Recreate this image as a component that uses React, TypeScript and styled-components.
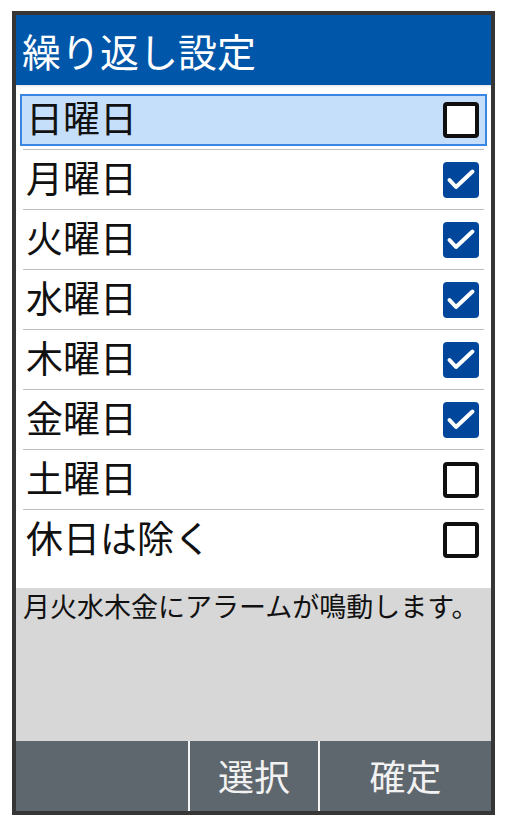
import React from "react";
import styled, { createGlobalStyle } from "styled-components";

const GlobalStyle = createGlobalStyle`
  html, body {
    margin: 0;
    padding: 0;
    background: #ffffff;
  }
  body {
    font-family: "Noto Sans CJK JP", "Noto Sans", sans-serif;
  }
`;

const Frame = styled.div`
  box-sizing: border-box;
  margin: 11px 0 0 12px;
  width: 483px;
  height: 804px;
  border: 4px solid #363636;
  display: flex;
  flex-direction: column;
  background: #ffffff;
  overflow: hidden;
`;

const Header = styled.div`
  height: 70px;
  flex: none;
  background: #0056a8;
  color: #ffffff;
  display: flex;
  align-items: center;
  padding-left: 6px;
  font-size: 39px;
  box-shadow: 0 1px 2px rgba(0, 0, 0, 0.12);
  position: relative;
  z-index: 1;
`;

const List = styled.div`
  height: 503px;
  flex: none;
  padding-top: 5px;
  box-sizing: border-box;
  background: #ffffff;
`;

const Row = styled.div<{ $last?: boolean }>`
  box-sizing: border-box;
  height: 60px;
  margin: 0 7px;
  padding-top: 4px;
  border-bottom: 1px solid ${(p) => (p.$last ? "transparent" : "#bdbfbf")};
`;

const Item = styled.div<{ $selected?: boolean }>`
  box-sizing: border-box;
  height: 52px;
  margin: 0 -3px;
  padding: 0 6px 0 4px;
  display: flex;
  align-items: center;
  justify-content: space-between;
  border: 2px solid ${(p) => (p.$selected ? "#3a86e2" : "transparent")};
  background: ${(p) => (p.$selected ? "#c5dffb" : "transparent")};
  font-size: 37px;
  color: #111111;
`;

const Label = styled.span`
  line-height: 1;
  padding-bottom: 5px;
`;

const Box = styled.span<{ $checked?: boolean }>`
  box-sizing: border-box;
  width: 36px;
  height: 36px;
  flex: none;
  border-radius: 4px;
  display: flex;
  align-items: center;
  justify-content: center;
  background: ${(p) => (p.$checked ? "#00479b" : "#ffffff")};
  border: ${(p) => (p.$checked ? "none" : "4px solid #0f0f0f")};
`;

const Info = styled.div`
  height: 153px;
  flex: none;
  box-sizing: border-box;
  background: #d7d7d7;
  padding: 0 0 0 7px;
  font-size: 27px;
  line-height: 1.3;
  color: #111111;
`;

const Footer = styled.div`
  height: 70px;
  flex: none;
  display: flex;
  background: #5f676e;
  color: #f2f2f2;
  font-size: 36px;
`;

const SoftKey = styled.div<{ $w?: number; $divider?: boolean }>`
  box-sizing: border-box;
  ${(p) => (p.$w ? `width: ${p.$w}px; flex: none;` : "flex: 1;")}
  border-left: ${(p) => (p.$divider ? "2px solid #f4f4f4" : "none")};
  display: flex;
  align-items: center;
  justify-content: center;
  padding-bottom: 2px;
`;

const Check = () => (
  <svg width="36" height="36" viewBox="0 0 36 36">
    <path
      d="M6.5 18 L13 25 L29.5 9.5"
      fill="none"
      stroke="#ffffff"
      strokeWidth="4"
      strokeLinecap="round"
      strokeLinejoin="round"
    />
  </svg>
);

const days: { label: string; checked: boolean }[] = [
  { label: "日曜日", checked: false },
  { label: "月曜日", checked: true },
  { label: "火曜日", checked: true },
  { label: "水曜日", checked: true },
  { label: "木曜日", checked: true },
  { label: "金曜日", checked: true },
  { label: "土曜日", checked: false },
  { label: "休日は除く", checked: false },
];

export default function App() {
  return (
    <>
      <GlobalStyle />
      <Frame>
        <Header>繰り返し設定</Header>
        <List>
          {days.map((d, i) => (
            <Row key={d.label} $last={i === days.length - 1}>
              <Item $selected={i === 0}>
                <Label>{d.label}</Label>
                <Box $checked={d.checked}>{d.checked && <Check />}</Box>
              </Item>
            </Row>
          ))}
        </List>
        <Info>月火水木金にアラームが鳴動します。</Info>
        <Footer>
          <SoftKey $w={172} />
          <SoftKey $w={130} $divider>
            選択
          </SoftKey>
          <SoftKey $divider>確定</SoftKey>
        </Footer>
      </Frame>
    </>
  );
}
